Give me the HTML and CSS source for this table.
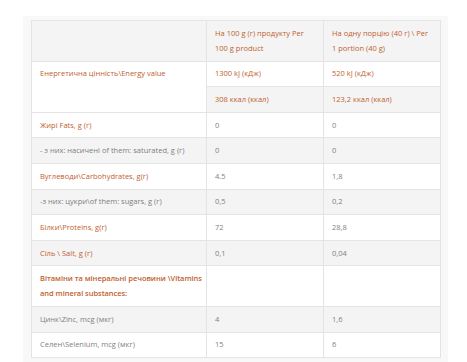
FILE: index.html
```html
<!DOCTYPE html>
<html lang="uk">
<head>
<meta charset="utf-8">
<link rel="stylesheet" href="styles.css">
</head>
<body>
<div class="page">
  <div class="panel">
    <table class="nutri">
      <colgroup>
        <col class="c1"><col class="c2"><col class="c3">
      </colgroup>
      <tr class="odd">
        <td></td>
        <td class="acc">На 100 g (г) продукту Per 100 g product</td>
        <td class="acc">На одну порцію (40 г) \ Per 1 portion (40 g)</td>
      </tr>
      <tr class="even">
        <td class="acc label" rowspan="2">Енергетична цінність\Energy value</td>
        <td class="acc">1300 kJ (кДж)</td>
        <td class="acc">520 kJ (кДж)</td>
      </tr>
      <tr class="odd">
        <td class="acc">308 ккал (ккал)</td>
        <td class="acc">123,2 ккал (ккал)</td>
      </tr>
      <tr class="even">
        <td class="acc">Жирі Fats, g (г)</td>
        <td>0</td>
        <td>0</td>
      </tr>
      <tr class="odd">
        <td>- з них: насичені of them: saturated, g (г)</td>
        <td>0</td>
        <td>0</td>
      </tr>
      <tr class="even">
        <td class="acc">Вуглеводи\Carbohydrates, g(г)</td>
        <td>4.5</td>
        <td>1,8</td>
      </tr>
      <tr class="odd">
        <td>-з них: цукри\of them: sugars, g (г)</td>
        <td>0,5</td>
        <td>0,2</td>
      </tr>
      <tr class="even">
        <td class="acc">Білки\Proteins, g(г)</td>
        <td>72</td>
        <td>28,8</td>
      </tr>
      <tr class="odd">
        <td class="acc">Сіль \ Salt, g (г)</td>
        <td>0,1</td>
        <td>0,04</td>
      </tr>
      <tr class="even">
        <td class="acc strong"><span class="nowrap">Вітаміни та мінеральні речовини \Vitamins</span> and mineral substances:</td>
        <td></td>
        <td></td>
      </tr>
      <tr class="odd">
        <td>Цинк\Zinc, mcg (мкг)</td>
        <td>4</td>
        <td>1,6</td>
      </tr>
      <tr class="even">
        <td>Селен\Selenium, mcg (мкг)</td>
        <td>15</td>
        <td>6</td>
      </tr>
    </table>
  </div>
</div>
</body>
</html>
```
FILE: styles.css
```css
html, body {
  margin: 0;
  padding: 0;
  background: #ffffff;
}
.page {
  padding: 16px 0 0 23px;
  font-family: "Open Sans", "Liberation Sans", sans-serif;
  font-size: 7.5px;
  color: #7f7f7f;
}
.panel {
  width: 409px;
  background: #f8f8f8;
  padding: 4px 8px 6px 8px;
}
.nutri {
  width: 409px;
  border-collapse: collapse;
  table-layout: fixed;
  border: 1px solid #e4e4e4;
}
.c1 { width: 175px; }
.c2 { width: 117px; }
.c3 { width: 117px; }
.nutri td {
  border: 1px solid #e4e4e4;
  padding: 4.8px 8px;
  line-height: 15px;
  vertical-align: top;
  text-align: left;
}
.nutri tr.odd td { background: #f4f4f4; }
.nutri tr.even td { background: #ffffff; }
.nutri td.label { background: #ffffff; }
.acc { color: #c0612f; }
.strong { font-weight: 600; letter-spacing: -0.05px; }
.nowrap { white-space: nowrap; }
```
